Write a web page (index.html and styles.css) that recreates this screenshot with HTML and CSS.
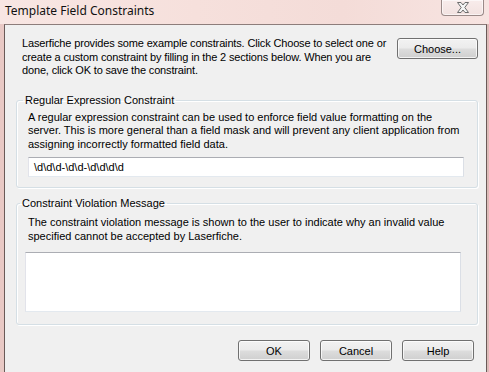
FILE: index.html
```html
<!DOCTYPE html>
<html>
<head>
<meta charset="utf-8">
<link rel="stylesheet" href="styles.css">
</head>
<body>
<div class="window">
  <div class="titlebar">
    <span class="title">Template Field Constraints</span>
    <div class="close">
      <svg width="14" height="11" viewBox="0 0 14 11"><path d="M1.5 0.5 H5 L7 3 L9 0.5 H12.5 L8.8 5.5 L12.5 10.5 H9 L7 8 L5 10.5 H1.5 L5.2 5.5 Z" fill="#f4f4f4" stroke="#6d6d6d" stroke-width="1" stroke-linejoin="round"/></svg>
    </div>
  </div>
  <div class="frame">
    <div class="client">
      <div class="intro">
        <p class="intro-text">Laserfiche provides some example constraints. Click Choose to select one or create a custom constraint by filling in the 2 sections below. When you are done, click OK to save the constraint.</p>
        <button class="btn btn-choose">Choose...</button>
      </div>
      <fieldset class="group group-regex">
        <legend>Regular Expression Constraint</legend>
        <p class="group-text">A regular expression constraint can be used to enforce field value formatting on the server. This is more general than a field mask and will prevent any client application from assigning incorrectly formatted field data.</p>
        <div class="textbox">\d\d\d-\d\d-\d\d\d\d</div>
      </fieldset>
      <fieldset class="group group-msg">
        <legend>Constraint Violation Message</legend>
        <p class="group-text">The constraint violation message is shown to the user to indicate why an invalid value specified cannot be accepted by Laserfiche.</p>
        <div class="textarea"></div>
      </fieldset>
      <div class="actions">
        <button class="btn">OK</button>
        <button class="btn">Cancel</button>
        <button class="btn">Help</button>
      </div>
    </div>
  </div>
</div>
</body>
</html>
```
FILE: styles.css
```css
html, body {
  margin: 0;
  padding: 0;
  width: 489px;
  height: 372px;
  overflow: hidden;
}
body {
  font-family: "Liberation Sans", Arial, sans-serif;
  font-size: 11px;
  color: #000;
}
.window {
  display: flex;
  flex-direction: column;
  height: 372px;
  background: #ecd2cf;
}
.titlebar {
  height: 24px;
  display: flex;
  align-items: flex-start;
  background: linear-gradient(90deg, #f8e6e3 0%, #f6e0dc 40%, #f4dcd8 70%, #f7e4e1 100%);
}
.title {
  font-family: "Noto Sans", "Open Sans", sans-serif;
  font-size: 12px;
  line-height: 16px;
  margin: 3px 0 0 5px;
  color: #111;
}
.close {
  margin-left: auto;
  margin-right: 5px;
  width: 41px;
  height: 15px;
  border: 1px solid #9a8a88;
  border-top: none;
  border-radius: 0 0 4px 4px;
  background: linear-gradient(#f8eceb, #f2e2e0);
  box-shadow: inset 0 0 0 1px rgba(255,255,255,0.6);
  display: flex;
  align-items: center;
  justify-content: center;
}
.close svg { display: block; }
.frame {
  flex: 1;
  display: flex;
  padding: 0 2px 0 4px;
  background: linear-gradient(90deg, #e9c9c5, #dcbcb8);
}
.client {
  flex: 1;
  background: #f0f0f0;
  border-left: 1px solid #6a5a58;
  border-right: 1px solid #6a5a58;
  border-top: 1px solid #8d7d7b;
  padding: 12px 8px 0 11px;
  display: flex;
  flex-direction: column;
}
.intro {
  display: flex;
  align-items: flex-start;
  justify-content: space-between;
}
.intro-text {
  margin: 0 0 0 6px;
  width: 374px;
  line-height: 13.5px;
  letter-spacing: -0.15px;
}
.btn {
  font-family: "Liberation Sans", Arial, sans-serif;
  font-size: 11px;
  color: #000;
  height: 21px;
  width: 72px;
  padding: 0;
  border: 1px solid #707070;
  border-radius: 3px;
  background: linear-gradient(#f2f2f2 0%, #ebebeb 48%, #dddddd 52%, #cfcfcf 100%);
  box-shadow: inset 0 0 0 1px rgba(255,255,255,0.75);
}
.btn-choose {
  width: 81px;
  margin-top: 1px;
  flex: none;
}
.group {
  margin: 0;
  border: 1px solid #d5dfe5;
  border-radius: 3px;
  box-shadow: inset 1px 1px 0 #fff, 1px 1px 0 #fff;
  min-width: 0;
}
.group legend {
  padding: 0 2px;
  margin-left: -5px;
  line-height: 13px;
}
.group-regex {
  margin-top: 16px;
  padding: 4px 13px 10px 11px;
}
.group-msg {
  margin-top: 9px;
  padding: 6px 16px 12px 8px;
}
.group-text {
  margin: 0;
  line-height: 13.5px;
}
.group-msg .group-text {
  margin-left: 3px;
}
.textbox {
  margin-top: 6px;
  height: 18px;
  line-height: 18px;
  padding-left: 5px;
  background: #fff;
  border: 1px solid #e3e9ef;
  border-top-color: #abadb3;
  border-left-color: #e2e3ea;
  border-right-color: #dbdfe6;
}
.textarea {
  margin-top: 9px;
  height: 58px;
  background: #fff;
  border: 1px solid #e3e9ef;
  border-top-color: #abadb3;
  border-left-color: #e2e3ea;
  border-right-color: #dbdfe6;
}
.actions {
  display: flex;
  justify-content: flex-end;
  gap: 10px;
  margin-top: 15px;
  padding-right: 4px;
}
```
